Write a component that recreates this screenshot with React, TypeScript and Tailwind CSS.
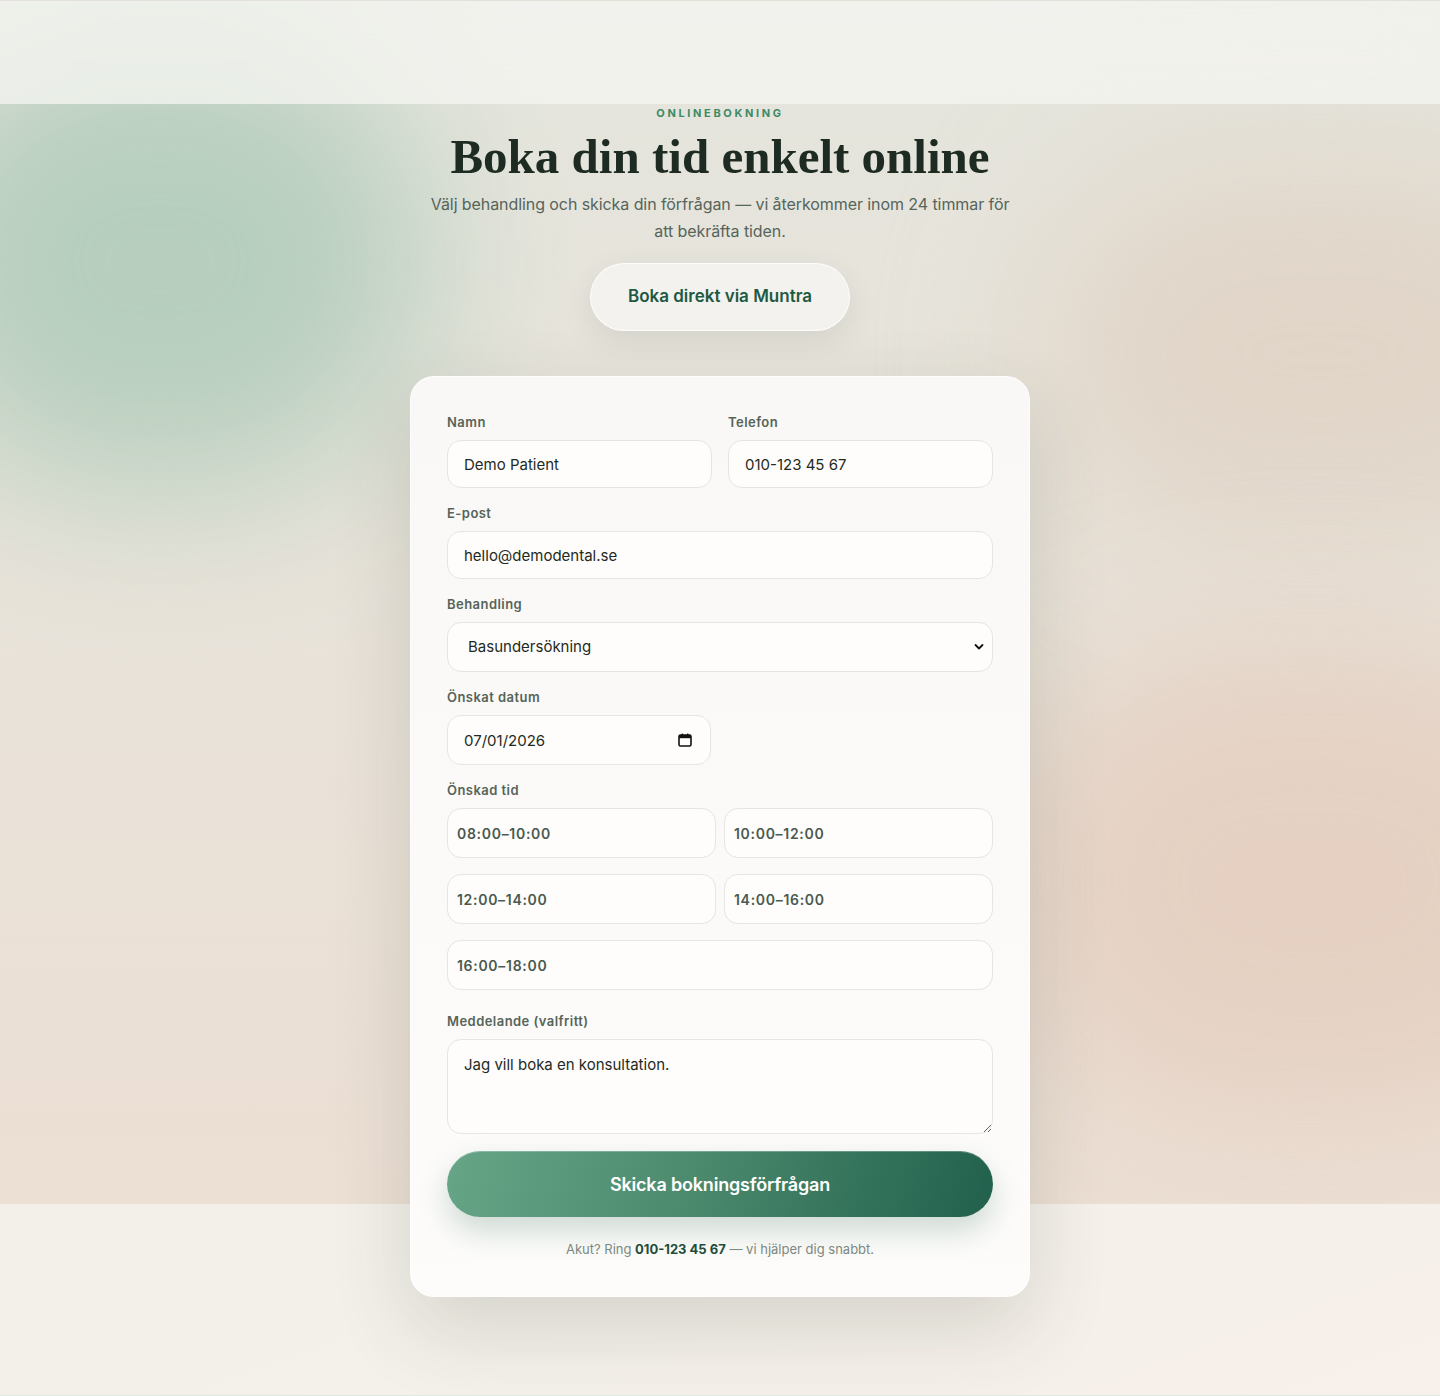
import { useState } from "react";

const slots = ["08:00–10:00", "10:00–12:00", "12:00–14:00", "14:00–16:00", "16:00–18:00"];

function Label({ children }: { children: React.ReactNode }) {
  return (
    <label className="block text-[13px] leading-4 font-semibold tracking-[0.035em] text-[#56645a] mb-[10px]">
      {children}
    </label>
  );
}

const inputCls =
  "w-full h-12 rounded-[14px] border border-[#e7e5e1] bg-[#fefdfc] px-[16px] text-[15px] text-[#1f2a22] outline-none";

function App() {
  const [slot, setSlot] = useState<string | null>(null);

  return (
    <div
      className="relative min-h-[1396px] bg-[#f3f0ea] border-t border-b border-t-[#e4e1db] border-b-[#dfe8e1] overflow-hidden"
      style={{ fontFamily: "Inter, 'Noto Sans', sans-serif" }}
    >
      {/* hero background with soft blobs */}
      <div className="absolute inset-x-0 top-0 h-[1203px] bg-[linear-gradient(180deg,#e4e5dd_0%,#e8e3da_45%,#ecdfd4_100%)] overflow-hidden">
        <div className="absolute left-[-110px] top-[30px] w-[540px] h-[460px] rounded-full bg-[#b2ccbb] blur-[80px] opacity-90" />
        <div className="absolute right-[-160px] top-[160px] w-[560px] h-[380px] rounded-full bg-[#e0d2c4] blur-[80px] opacity-80" />
        <div className="absolute right-[-180px] top-[640px] w-[620px] h-[480px] rounded-full bg-[#e4cdbe] blur-[80px] opacity-80" />
      </div>
      <div className="absolute inset-x-0 top-[1203px] bottom-0 bg-[linear-gradient(160deg,#f2f0e9_0%,#f4f0ea_50%,#f8f0ea_100%)]" />

      {/* header strip */}
      <header className="relative h-[103px] bg-[#f5f5f1]/75 backdrop-blur-xl" />

      <main className="relative flex flex-col items-center pb-[97px]">
        <p className="mt-[1px] text-[11px] leading-4 font-bold tracking-[0.24em] text-[#3f8a65]">
          ONLINEBOKNING
        </p>
        <h1
          className="mt-[9px] text-[49px] leading-[53px] font-bold text-[#1d2b22]"
          style={{ fontFamily: "'Liberation Serif', Georgia, serif" }}
        >
          Boka din tid enkelt online
        </h1>
        <p className="mt-[8px] max-w-[600px] text-center text-[16px] leading-[27px] tracking-[-0.005em] text-[#56645b]">
          Välj behandling och skicka din förfrågan — vi återkommer inom 24 timmar för att bekräfta tiden.
        </p>
        <button className="mt-[18px] w-[260px] h-[68px] rounded-full bg-[#f3f2ee] border border-white/80 shadow-[0_10px_30px_rgba(60,70,60,0.10)] text-[17px] font-semibold text-[#1e5a43]">
          Boka direkt via Muntra
        </button>

        <form
          className="mt-[45px] w-[620px] rounded-[24px] bg-[linear-gradient(180deg,#f9f8f6_0%,#fbfaf8_60%,#fdfcfb_100%)] border border-white/70 shadow-[0_30px_80px_rgba(50,60,45,0.16)] px-[36px] pt-[37px] pb-[37px] flex flex-col gap-[17px]"
          onSubmit={(e) => e.preventDefault()}
        >
          <div className="grid grid-cols-2 gap-4">
            <div>
              <Label>Namn</Label>
              <input className={inputCls} defaultValue="Demo Patient" />
            </div>
            <div>
              <Label>Telefon</Label>
              <input className={inputCls} defaultValue="010-123 45 67" />
            </div>
          </div>

          <div>
            <Label>E-post</Label>
            <input className={inputCls} defaultValue="hello@demodental.se" />
          </div>

          <div>
            <Label>Behandling</Label>
            <div className="relative">
              <select className={inputCls + " h-[50px] appearance-none pl-[20px]"} defaultValue="bas">
                <option value="bas">Basundersökning</option>
                <option value="kons">Konsultation</option>
                <option value="blek">Tandblekning</option>
              </select>
              <svg
                className="absolute right-[9px] top-1/2 -translate-y-1/2 pointer-events-none"
                width="10"
                height="7"
                viewBox="0 0 10 7"
              >
                <path d="M1.5 1.5 5 5l3.5-3.5" fill="none" stroke="#111" strokeWidth="1.8" strokeLinecap="round" strokeLinejoin="round" />
              </svg>
            </div>
          </div>

          <div>
            <Label>Önskat datum</Label>
            <div className="relative w-[264px]">
              <input className={inputCls + " h-[50px]"} defaultValue="07/01/2026" />
              <svg
                className="absolute right-[19px] top-1/2 -translate-y-1/2 pointer-events-none"
                width="14"
                height="14"
                viewBox="0 0 14 14"
              >
                <rect x="1" y="2" width="12" height="11" rx="1.5" fill="none" stroke="#111" strokeWidth="1.6" />
                <rect x="1" y="2" width="12" height="3.2" fill="#111" />
                <rect x="3.5" y="0.5" width="1.6" height="2.5" rx="0.5" fill="#111" />
                <rect x="8.9" y="0.5" width="1.6" height="2.5" rx="0.5" fill="#111" />
              </svg>
            </div>
          </div>

          <div className="mb-[6px]">
            <Label>Önskad tid</Label>
            <div className="grid grid-cols-2 gap-x-2 gap-y-4">
              {slots.map((s, i) => (
                <button
                  key={s}
                  type="button"
                  onClick={() => setSlot(s)}
                  className={
                    "h-[50px] rounded-[14px] border bg-[#fefdfc] pl-[9px] text-left text-[14px] font-semibold tracking-[0.05em] text-[#4a5a4f] " +
                    (slot === s ? "border-[#4f9273]" : "border-[#e7e5e1]") +
                    (i === slots.length - 1 ? " col-span-2" : "")
                  }
                >
                  {s}
                </button>
              ))}
            </div>
          </div>

          <div>
            <Label>Meddelande (valfritt)</Label>
            <textarea
              className="block w-full h-[95px] rounded-[14px] border border-[#e7e5e1] bg-[#fefdfc] px-[16px] py-[15px] text-[15px] leading-5 text-[#1f2a22] outline-none"
              defaultValue="Jag vill boka en konsultation."
            />
          </div>

          <button
            type="submit"
            className="h-[66px] rounded-full bg-[linear-gradient(105deg,#67a587_0%,#4b8a6d_45%,#21604c_100%)] shadow-[0_14px_30px_rgba(40,100,75,0.22),inset_0_1px_0_rgba(255,255,255,0.25)] text-[18px] font-semibold tracking-[-0.01em] text-white"
          >
            Skicka bokningsförfrågan
          </button>

          <p className="mt-[5px] text-center text-[13px] leading-5 text-[#7b887f]">
            Akut? Ring <span className="font-bold text-[#1f4d3a]">010-123 45 67</span> — vi hjälper dig snabbt.
          </p>
        </form>
      </main>
    </div>
  );
}

export default App;
